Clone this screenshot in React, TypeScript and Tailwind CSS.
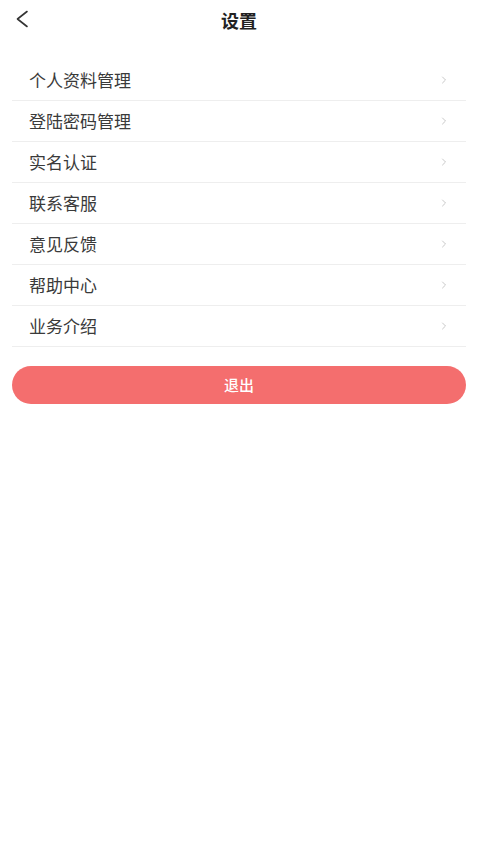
import { ChevronRight } from 'lucide-react';

const items = ['个人资料管理', '登陆密码管理', '实名认证', '联系客服', '意见反馈', '帮助中心', '业务介绍'];

const font = { fontFamily: '"Noto Sans CJK SC", "Noto Sans", sans-serif' };

export default function App() {
  return (
    <div className="min-h-[850px] bg-white" style={font}>
      {/* Header */}
      <div className="relative flex h-[40px] items-center justify-center">
        <svg
          className="absolute left-[14px] top-[10px]"
          width="16"
          height="18"
          viewBox="0 0 16 18"
          fill="none"
          stroke="#333"
          strokeWidth="1.6"
          strokeLinecap="round"
          strokeLinejoin="round"
        >
          <path d="M13 1.5 L3.5 9 L13 16.5" />
        </svg>
        <h1 className="text-[18px] font-bold text-[#222]">设置</h1>
      </div>

      {/* List */}
      <div className="mx-[12px] mt-[20px]">
        {items.map(item => (
          <div
            key={item}
            className="flex h-[41px] items-center justify-between border-b border-[#eeeeee] pl-[17px] pr-[16px]"
          >
            <span className="text-[17px] text-[#3a3a3a]">{item}</span>
            <ChevronRight className="h-[12px] w-[12px] text-[#b5b5b5]" strokeWidth={1.5} />
          </div>
        ))}
      </div>

      {/* Logout */}
      <div className="mx-[12px] mt-[19px]">
        <button className="flex h-[38px] w-full items-center justify-center rounded-full bg-[#f46e6e] text-[15px] font-medium text-white">
          退出
        </button>
      </div>
    </div>
  );
}
